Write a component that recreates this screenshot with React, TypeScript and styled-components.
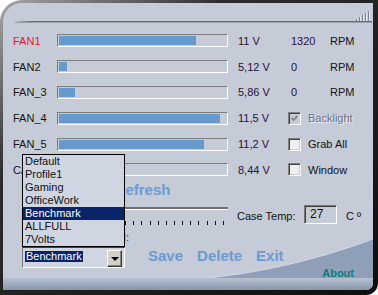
import React from 'react'
import styled, { createGlobalStyle } from 'styled-components'

const GlobalStyle = createGlobalStyle`
  html, body {
    margin: 0;
    padding: 0;
    background: #fff;
  }
  body {
    font-family: 'Liberation Sans', Arial, sans-serif;
    font-size: 11px;
    color: #111;
  }
  * {
    box-sizing: border-box;
  }
`

const Window = styled.div`
  position: relative;
  width: 378px;
  height: 295px;
  border-style: solid;
  border-color: transparent;
  border-width: 3px 5px 5px 3px;
  border-radius: 22px 0 12px 0;
  background:
    linear-gradient(#c5cbd7, #c5cbd7) padding-box,
    linear-gradient(to bottom right, #a8a8a8 0%, #2c2c2c 30%, #0e0e0e 100%) border-box;
  overflow: hidden;
  display: flex;
  flex-direction: column;
`

const Wave = styled.svg`
  position: absolute;
  left: 0;
  bottom: 0;
  z-index: 0;
`

const Content = styled.div`
  position: relative;
  z-index: 1;
  display: flex;
  flex-direction: column;
`

const Header = styled.div`
  height: 25px;
  padding: 7px 1px 0 12px;
  display: flex;
  flex-direction: column;
`

const IconRow = styled.div`
  height: 11px;
  display: flex;
  justify-content: flex-end;
  align-items: flex-end;
  padding-right: 2px;
`

const Rule = styled.div`
  height: 2px;
  background: linear-gradient(to right, rgba(110, 110, 110, 0) 0, #6e6e6e 14px, #6e6e6e 100%);
  border-bottom: 1px solid #9a9fa8;
`

const FanGrid = styled.div`
  margin-left: 10px;
  display: grid;
  grid-template-columns: 44px 171px 60px 42px 1fr;
  grid-auto-rows: 25.8px;
  align-items: center;
`

const FanName = styled.div<{ $alert?: boolean }>`
  color: ${({ $alert }) => ($alert ? '#e8162c' : '#141414')};
`

const Bar = styled.div`
  height: 13px;
  padding: 1px;
  border-top: 1px solid #7b7b7b;
  border-left: 1px solid #7b7b7b;
  border-bottom: 1px solid #fff;
  border-right: 1px solid #fff;
`

const BarFill = styled.div`
  height: 100%;
  background: #6699cc;
`

const Volts = styled.div`
  padding-left: 10px;
  color: #2a1038;
`

const Rpm = styled.div`
  padding-left: 3px;
  color: #2a1038;
`

const Unit = styled.div`
  color: #141414;
`

const Option = styled.label<{ $disabled?: boolean }>`
  grid-column: 4 / span 2;
  display: flex;
  align-items: center;
  gap: 7px;
  color: ${({ $disabled }) => ($disabled ? '#6f7280' : '#141414')};
  text-shadow: ${({ $disabled }) => ($disabled ? '1px 1px 0 #eef0f4' : 'none')};
`

const Box = styled.span<{ $disabled?: boolean }>`
  width: 13px;
  height: 13px;
  display: flex;
  align-items: center;
  justify-content: center;
  border-top: 1px solid #808080;
  border-left: 1px solid #808080;
  border-bottom: 1px solid #fff;
  border-right: 1px solid #fff;
  box-shadow: inset 1px 1px 0 #404040, inset -1px -1px 0 #d4d0c8;
  background: ${({ $disabled }) => ($disabled ? '#c5cbd7' : '#eef0f4')};
`

const Lower = styled.div`
  margin-left: 10px;
  display: flex;
  flex-direction: column;
`

const LinkButton = styled.span`
  font-weight: bold;
  font-size: 15px;
  color: #6a9cd3;
  line-height: 18px;
`

const RefreshRow = styled.div`
  margin-left: 44px;
  width: 171px;
  height: 14px;
  line-height: 14px;
  text-align: center;
  ${LinkButton} {
    line-height: 14px;
  }
`

const ControlRow = styled.div`
  height: 34px;
  display: flex;
`

const Slider = styled.div`
  margin-left: 44px;
  width: 171px;
  padding-top: 10px;
`

const Track = styled.div`
  height: 3px;
  border-top: 2px solid #6f6f6f;
  border-bottom: 1px solid #fff;
`

const Ticks = styled.div`
  margin-top: 11px;
  height: 4px;
  padding: 0 4px 0 3px;
  display: flex;
  justify-content: space-between;
`

const Tick = styled.span`
  width: 1px;
  height: 4px;
  background: #111;
`

const CaseTemp = styled.div`
  margin-left: 9px;
  display: flex;
  align-items: flex-start;
`

const TempLabel = styled.span`
  width: 67px;
  margin-top: 13px;
  line-height: 13px;
`

const TempBox = styled.div`
  margin-top: 8px;
  width: 33px;
  height: 19px;
  padding: 1px 0 0 5px;
  font-size: 12px;
  line-height: 15px;
  border-top: 1px solid #777;
  border-left: 1px solid #777;
  border-bottom: 1px solid #fff;
  border-right: 1px solid #fff;
  box-shadow: inset 1px 1px 0 #404040;
`

const Degree = styled.span`
  margin: 13px 0 0 9px;
  line-height: 13px;
`

const LoadLabel = styled.div`
  margin-left: 9px;
  width: 107px;
  height: 13px;
  line-height: 13px;
  text-align: right;
  color: #302a7a;
`

const BottomRow = styled.div`
  margin-top: 3px;
  display: flex;
  align-items: flex-start;
`

const Combo = styled.div`
  position: relative;
  margin-left: 9px;
  width: 103px;
  height: 21px;
  padding: 2px 2px 1px 2px;
  display: flex;
  align-items: flex-start;
  justify-content: space-between;
  background: #cfd5e1;
  border-top: 1px solid #404040;
  border-left: 1px solid #7a7a7a;
  border-bottom: 1px solid #fff;
  border-right: 1px solid #fff;
`

const ComboValue = styled.span`
  margin-top: 1px;
  padding: 0 1px;
  height: 11px;
  line-height: 11px;
  background: #0a246a;
  color: #fff;
`

const ComboButton = styled.span`
  width: 15px;
  height: 17px;
  display: flex;
  align-items: center;
  justify-content: center;
  background: #d4d0c8;
  border-top: 1px solid #fff;
  border-left: 1px solid #fff;
  border-bottom: 1px solid #404040;
  border-right: 1px solid #404040;
  box-shadow: inset -1px -1px 0 #808080;
`

const Arrow = styled.span`
  width: 0;
  height: 0;
  border-left: 4px solid transparent;
  border-right: 4px solid transparent;
  border-top: 4px solid #000;
  margin-top: 1px;
`

const List = styled.ul`
  position: absolute;
  left: -1px;
  bottom: 100%;
  width: 103px;
  margin: 0 0 1px 0;
  padding: 0;
  list-style: none;
  background: #cfd5e1;
  border: 1px solid #000;
`

const ListItem = styled.li<{ $selected?: boolean }>`
  height: 13px;
  line-height: 13px;
  padding-left: 2px;
  background: ${({ $selected }) => ($selected ? '#0a246a' : 'transparent')};
  color: ${({ $selected }) => ($selected ? '#fff' : '#111')};
`

const Actions = styled.div`
  margin-left: 23px;
  display: flex;
  gap: 14px;
`

const AboutRow = styled.div`
  margin-top: -1px;
  padding-right: 19px;
  display: flex;
  justify-content: flex-end;
`

const About = styled.span`
  font-weight: bold;
  font-size: 11px;
  line-height: 12px;
  color: #0e7c7c;
`

type Fan = {
  name: string
  level: number
  volts: string
  rpm?: string
  alert?: boolean
  option?: { label: string; checked?: boolean; disabled?: boolean }
}

const fans: Fan[] = [
  { name: 'FAN1', level: 82, volts: '11 V', rpm: '1320', alert: true },
  { name: 'FAN2', level: 4.8, volts: '5,12 V', rpm: '0' },
  { name: 'FAN_3', level: 9.6, volts: '5,86 V', rpm: '0' },
  { name: 'FAN_4', level: 96.4, volts: '11,5 V', option: { label: 'Backlight', checked: true, disabled: true } },
  { name: 'FAN_5', level: 86.8, volts: '11,2 V', option: { label: 'Grab All' } },
  { name: 'CASE', level: 0, volts: '8,44 V', option: { label: 'Window' } },
]

const profiles = ['Default', 'Profile1', 'Gaming', 'OfficeWork', 'Benchmark', 'ALLFULL', '7Volts']

function Signal() {
  return (
    <svg width="14" height="10" viewBox="0 0 14 10">
      {[2, 4, 6, 8, 10].map((h, i) => (
        <g key={i}>
          <rect x={i * 3} y={10 - h} width="1" height={h} fill="#7d828b" />
          <rect x={i * 3 + 1} y={10 - h} width="1" height={h} fill="#e6e9ef" />
        </g>
      ))}
    </svg>
  )
}

function Check() {
  return (
    <svg width="7" height="7" viewBox="0 0 7 7">
      <polyline points="0.5,3 2.5,5 6.5,1" fill="none" stroke="#858585" strokeWidth="1.8" />
    </svg>
  )
}

export default function App(): JSX.Element {
  return (
    <>
      <GlobalStyle />
      <Window>
        <Wave width="370" height="55" viewBox="0 0 370 55">
          <defs>
            <linearGradient id="band" x1="0" y1="0" x2="0" y2="1">
              <stop offset="0" stopColor="#b7c0ce" />
              <stop offset="1" stopColor="#8696ae" />
            </linearGradient>
          </defs>
          <path d="M150 47 C 230 44, 300 30, 370 4 L 370 55 L 150 55 Z" fill="#8e9fb7" />
          <path d="M150 47 C 230 44, 300 30, 370 4" fill="none" stroke="#d2d9e4" strokeWidth="1" />
          <rect x="0" y="43" width="370" height="12" fill="url(#band)" />
        </Wave>
        <Content>
          <Header>
            <IconRow>
              <Signal />
            </IconRow>
            <Rule />
          </Header>
          <FanGrid>
            {fans.map((fan) => (
              <React.Fragment key={fan.name}>
                <FanName $alert={fan.alert}>{fan.name}</FanName>
                <Bar>
                  <BarFill style={{ width: `${fan.level}%` }} />
                </Bar>
                <Volts>{fan.volts}</Volts>
                {fan.option ? (
                  <Option $disabled={fan.option.disabled}>
                    <Box $disabled={fan.option.disabled}>{fan.option.checked && <Check />}</Box>
                    {fan.option.label}
                  </Option>
                ) : (
                  <>
                    <Rpm>{fan.rpm}</Rpm>
                    <Unit>RPM</Unit>
                  </>
                )}
              </React.Fragment>
            ))}
          </FanGrid>
          <Lower>
            <RefreshRow>
              <LinkButton>Refresh</LinkButton>
            </RefreshRow>
            <ControlRow>
              <Slider>
                <Track />
                <Ticks>
                  {Array.from({ length: 21 }).map((_, i) => (
                    <Tick key={i} />
                  ))}
                </Ticks>
              </Slider>
              <CaseTemp>
                <TempLabel>Case Temp:</TempLabel>
                <TempBox>27</TempBox>
                <Degree>C º</Degree>
              </CaseTemp>
            </ControlRow>
            <LoadLabel>Profile to be loaded:</LoadLabel>
            <BottomRow>
              <Combo>
                <List>
                  {profiles.map((p) => (
                    <ListItem key={p} $selected={p === 'Benchmark'}>
                      {p}
                    </ListItem>
                  ))}
                </List>
                <ComboValue>Benchmark</ComboValue>
                <ComboButton>
                  <Arrow />
                </ComboButton>
              </Combo>
              <Actions>
                <LinkButton>Save</LinkButton>
                <LinkButton>Delete</LinkButton>
                <LinkButton>Exit</LinkButton>
              </Actions>
            </BottomRow>
            <AboutRow>
              <About>About</About>
            </AboutRow>
          </Lower>
        </Content>
      </Window>
    </>
  )
}
